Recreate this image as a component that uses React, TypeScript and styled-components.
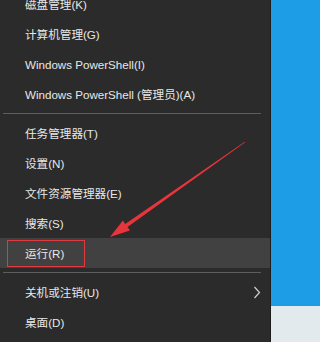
import React from "react";
import styled, { createGlobalStyle } from "styled-components";

const GlobalStyle = createGlobalStyle`
  html, body {
    margin: 0;
    padding: 0;
    background: #2b2b2b;
    overflow: hidden;
  }
`;

const Screen = styled.div`
  position: relative;
  display: flex;
  width: 100vw;
  min-width: 275px;
  height: 342px;
  overflow: hidden;
  font-family: "Liberation Sans", "Noto Sans CJK SC", sans-serif;
`;

const Menu = styled.div`
  display: flex;
  flex-direction: column;
  flex: 0 0 270px;
  margin-top: -11px;
  background: #2b2b2b;
  border-right: 1px solid #1c1c1c;
`;

const Item = styled.div<{ $active?: boolean }>`
  position: relative;
  display: flex;
  align-items: center;
  justify-content: space-between;
  flex: 0 0 30px;
  padding: 0 9px 0 25px;
  background: ${(p) => (p.$active ? "#414141" : "transparent")};
  color: #e8e8e8;
  font-size: 11.6px;
  white-space: nowrap;
`;

const Separator = styled.div`
  height: 1px;
  margin: 4px 9px 4px 3px;
  background: #5e5e5e;
`;

const Highlight = styled.span`
  position: absolute;
  left: 7px;
  top: 2px;
  width: 78px;
  height: 27px;
  border: 1.5px solid #e03a40;
  box-sizing: border-box;
`;

const Desktop = styled.div`
  display: flex;
  flex-direction: column;
  flex: 1 0 4px;
`;

const Blue = styled.div`
  flex: 0 0 306px;
  background: #1c9de6;
`;

const Pale = styled.div`
  flex: 1;
  background: #e3eaee;
`;

const Arrow = styled.svg`
  position: absolute;
  left: 0;
  top: 0;
  pointer-events: none;
`;

const Chevron = () => (
  <svg width="8" height="13" viewBox="0 0 8 13">
    <path d="M1.5 1 L6.5 6.5 L1.5 12" fill="none" stroke="#d0d0d0" strokeWidth="1.2" />
  </svg>
);

export default function App() {
  return (
    <>
      <GlobalStyle />
      <Screen>
        <Menu>
          <Item>磁盘管理(K)</Item>
          <Item>计算机管理(G)</Item>
          <Item>Windows PowerShell(I)</Item>
          <Item>Windows PowerShell (管理员)(A)</Item>
          <Separator />
          <Item>任务管理器(T)</Item>
          <Item>设置(N)</Item>
          <Item>文件资源管理器(E)</Item>
          <Item>搜索(S)</Item>
          <Item $active>
            运行(R)
            <Highlight />
          </Item>
          <Separator />
          <Item>
            关机或注销(U)
            <Chevron />
          </Item>
          <Item>桌面(D)</Item>
        </Menu>
        <Desktop>
          <Blue />
          <Pale />
        </Desktop>
        <Arrow width="275" height="342" viewBox="0 0 275 342">
          <polygon
            points="245.2,142.3 244.8,141.7 125.2,223.9 122.9,220.6 110,237 129.9,230.4 127.5,227.1"
            fill="#e8353b"
          />
        </Arrow>
      </Screen>
    </>
  );
}
